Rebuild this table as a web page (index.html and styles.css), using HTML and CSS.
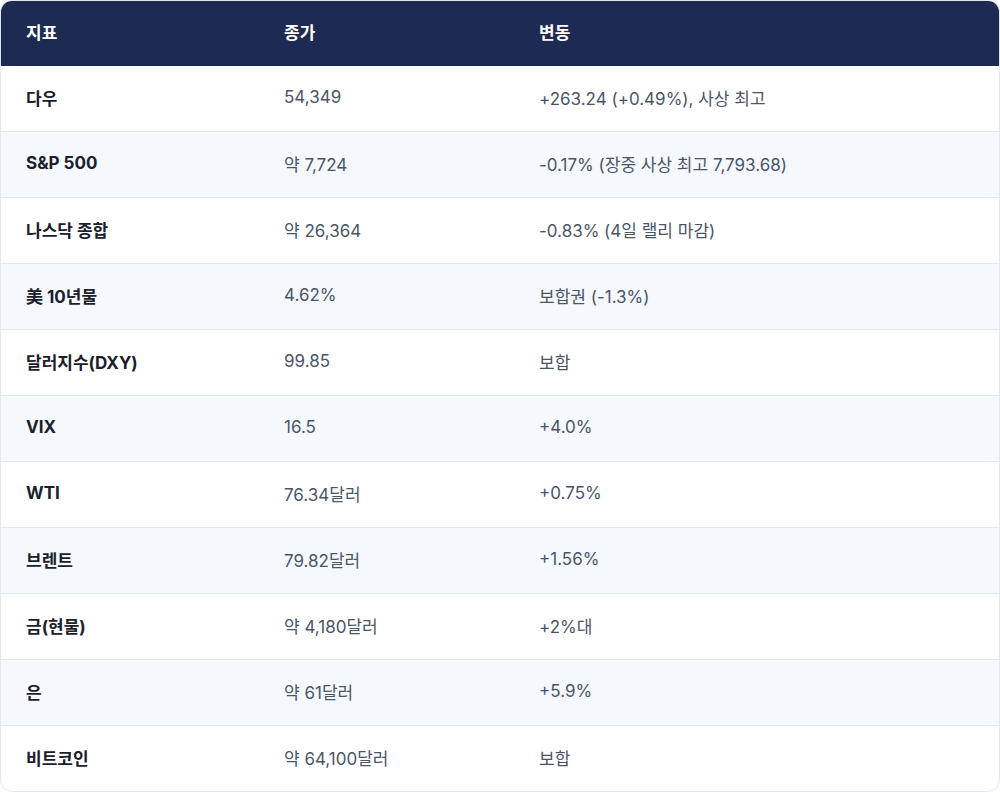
FILE: index.html
```html
<!DOCTYPE html>
<html lang="ko">
<head>
<meta charset="utf-8">
<link rel="stylesheet" href="styles.css">
</head>
<body>
<div class="table">
  <div class="row head"><div>지표</div><div>종가</div><div>변동</div></div>
  <div class="row"><div class="name">다우</div><div>54,349</div><div>+263.24 (+0.49%), 사상 최고</div></div>
  <div class="row alt"><div class="name">S&amp;P 500</div><div>약 7,724</div><div>-0.17% (장중 사상 최고 7,793.68)</div></div>
  <div class="row"><div class="name">나스닥 종합</div><div>약 26,364</div><div>-0.83% (4일 랠리 마감)</div></div>
  <div class="row alt"><div class="name">美 10년물</div><div>4.62%</div><div>보합권 (-1.3%)</div></div>
  <div class="row"><div class="name">달러지수(DXY)</div><div>99.85</div><div>보합</div></div>
  <div class="row alt"><div class="name">VIX</div><div>16.5</div><div>+4.0%</div></div>
  <div class="row"><div class="name">WTI</div><div>76.34달러</div><div>+0.75%</div></div>
  <div class="row alt"><div class="name">브렌트</div><div>79.82달러</div><div>+1.56%</div></div>
  <div class="row"><div class="name">금(현물)</div><div>약 4,180달러</div><div>+2%대</div></div>
  <div class="row alt"><div class="name">은</div><div>약 61달러</div><div>+5.9%</div></div>
  <div class="row last"><div class="name">비트코인</div><div>약 64,100달러</div><div>보합</div></div>
</div>
</body>
</html>
```
FILE: styles.css
```css
* { box-sizing: border-box; }
html, body { margin: 0; padding: 0; background: #ffffff; }
body {
  font-family: "Inter", "Noto Sans CJK KR", sans-serif;
  font-size: 17px;
  color: #4a5568;
}
.table {
  width: 1000px;
  height: 792px;
  border: 1px solid #e2e8f0;
  border-radius: 12px;
  overflow: hidden;
  display: flex;
  flex-direction: column;
}
.row {
  display: grid;
  grid-template-columns: 258px 255px 1fr;
  align-items: center;
  height: 66px;
  padding-bottom: 3px;
  border-bottom: 1px solid #e2e8f0;
  flex: none;
}
.row > div { padding-left: 25px; }
.row.head {
  background: #1d2b52;
  color: #ffffff;
  font-weight: 600;
  height: 65px;
  padding-bottom: 4px;
  border-bottom: none;
}
.row.alt { background: #f5f8fc; }
.row.last { border-bottom: none; flex: 1; }
.name { color: #1a202c; font-weight: 700; }
```
